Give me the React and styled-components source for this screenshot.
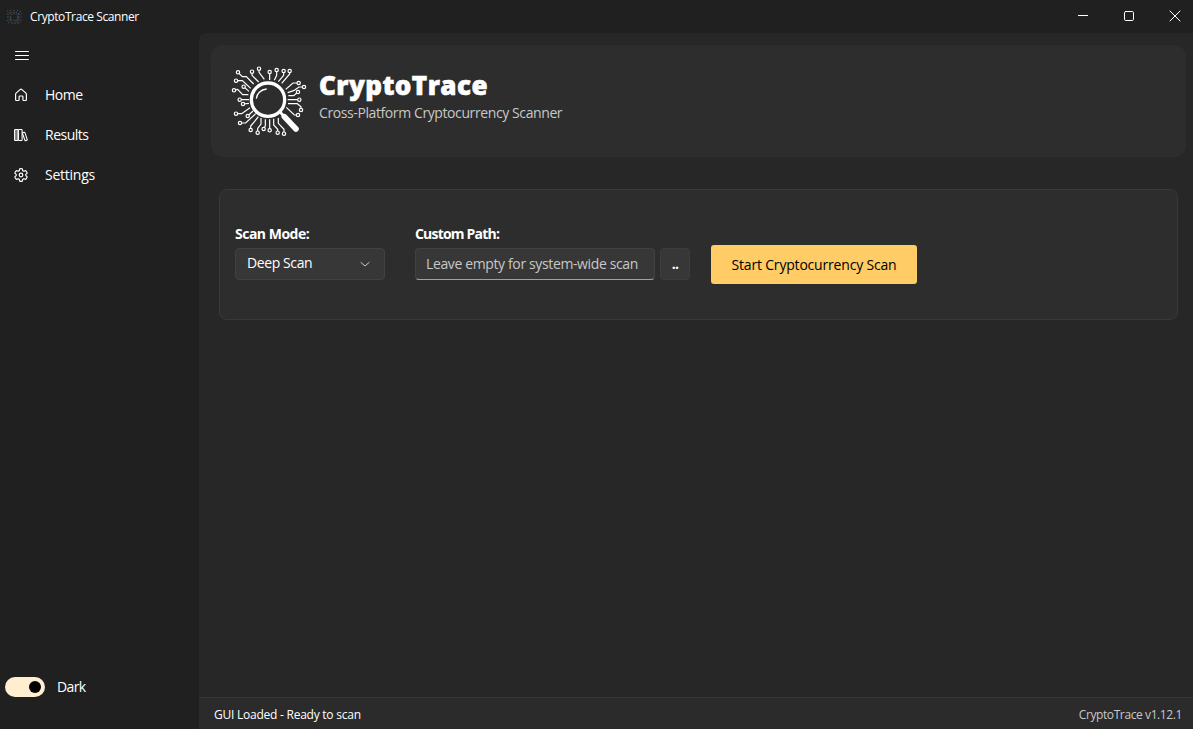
import React from "react";
import styled, { createGlobalStyle } from "styled-components";

const Global = createGlobalStyle`
  *, *::before, *::after { box-sizing: border-box; }
  html, body { margin: 0; background: #202020; }
  body { font-family: "Open Sans", "Noto Sans", sans-serif; font-size: 14px; color: #fff; overflow: hidden; }
  button, input { font: inherit; color: inherit; margin: 0; }
`;

const Window = styled.div`
  display: grid;
  grid-template-columns: 199px 1fr;
  grid-template-rows: 33px 1fr;
  width: 1193px;
  height: 729px;
  background: #202020;
`;

const TitleBar = styled.header`
  grid-column: 1 / -1;
  display: flex;
  align-items: center;
  padding-left: 6px;
`;

const Label = styled.span`
  font-size: ${(p) => p.$size || 14}px;
  font-weight: ${(p) => p.$weight || 400};
  letter-spacing: ${(p) => p.$track || 0}px;
  line-height: ${(p) => p.$line || 20}px;
  color: ${(p) => p.$color || "#fff"};
  white-space: nowrap;
`;

const AppName = styled(Label)`
  -webkit-text-stroke: 0.6px #fff;
`;

const WindowTitle = styled(Label)`
  margin-left: 7px;
`;

const WindowButtons = styled.div`
  display: flex;
  align-self: flex-start;
  margin-left: auto;
`;

const WindowButton = styled.button`
  display: grid;
  place-items: center;
  width: 46px;
  height: 32px;
  padding: 0;
  border: 0;
  background: transparent;
  &:last-child { margin-right: -5px; }
`;

const Sidebar = styled.nav`
  display: flex;
  flex-direction: column;
  padding: 2px 0 22px;
`;

const NavItem = styled.div`
  display: flex;
  align-items: center;
  height: 40px;
  padding-left: 14px;
  padding-top: ${(p) => p.$drop || 0}px;
  gap: 17px;
`;

const ThemeRow = styled.div`
  display: flex;
  align-items: center;
  gap: 12px;
  height: 20px;
  margin-top: auto;
  margin-bottom: 10px;
  padding-left: 5px;
`;

const Toggle = styled.div`
  display: flex;
  align-items: center;
  justify-content: flex-end;
  width: 40px;
  height: 20px;
  padding-right: 4px;
  border-radius: 10px;
  background: #ffefd0;
`;

const Knob = styled.div`
  width: 12px;
  height: 12px;
  border-radius: 50%;
  background: #000;
`;

const Content = styled.main`
  display: flex;
  flex-direction: column;
  background: #272727;
  border-top-left-radius: 8px;
  overflow: hidden;
`;

const Banner = styled.section`
  display: flex;
  height: 112px;
  margin: 12px 7px 0 12px;
  padding: 15px 14px;
  border-radius: 12px;
  background: #2d2d2d;
`;

const BannerText = styled.div`
  display: flex;
  flex-direction: column;
  padding: 7px 0 0 4px;
`;

const Panel = styled.section`
  display: flex;
  align-items: flex-start;
  height: 131px;
  margin: 32px 15px 0 20px;
  padding: 34px 15px 0;
  border: 1px solid #393939;
  border-radius: 8px;
  background: #2d2d2d;
`;

const Field = styled.div`
  display: flex;
  flex-direction: column;
  gap: 4px;
  width: ${(p) => p.$width}px;
  margin-right: ${(p) => p.$after}px;
`;

const Select = styled.div`
  display: flex;
  align-items: center;
  justify-content: space-between;
  height: 32px;
  padding: 0 13px 2px 11px;
  border: 1px solid #414141;
  border-radius: 4px;
  background: #373737;
`;

const PathInput = styled.div`
  display: flex;
  align-items: center;
  height: 32px;
  padding: 0 0 0 10px;
  border: 1px solid #414141;
  border-bottom-color: #a0a0a0;
  border-radius: 4px;
  background: #373737;
`;

const BrowseButton = styled.button`
  width: 30px;
  height: 32px;
  margin: 24px 21px 0 0;
  padding: 0;
  border: 1px solid #3d3d3d;
  border-radius: 4px;
  background: #373737;
`;

const StartButton = styled.button`
  width: 206px;
  height: 39px;
  margin-top: 21px;
  padding: 1px 0 0;
  border: 0;
  border-radius: 3px;
  background: #ffcc66;
`;

const StatusBar = styled.footer`
  display: flex;
  align-items: center;
  justify-content: space-between;
  height: 32px;
  margin-top: auto;
  padding: 2px 11px 0 15px;
  border-top: 1px solid #363636;
  background: #2b2b2b;
`;

/* Each trace starts at its round terminal and runs in towards the lens. */
const traces = [
  [39, 37, "L52 50H64L86 72"],
  [81, 35, "V46L101 66"],
  [102, 26, "V37L118 58"],
  [134, 36, "V60"],
  [155, 30, "V46L148 61"],
  [176, 33, "V46L160 65"],
  [194, 33, "V42L170 70"],
  [33, 62, "H52L77 85"],
  [27, 91, "L38 88L53 104H70"],
  [56, 80, "L72 94"],
  [44, 119, "H72"],
  [54, 132, "L72 130"],
  [33, 161, "H50L75 143"],
  [68, 168, "L84 153"],
  [45, 189, "H62L92 161"],
  [77, 210, "V198L89 184L100 170"],
  [98, 218, "V205L108 192V174"],
  [116, 207, "L121 197V178"],
  [134, 211, "V178"],
  [158, 218, "V208L146 195V176"],
  [177, 221, "V208L160 190V174"],
  [221, 69, "H204L182 88"],
  [237, 81, "H222L206 92L188 98"],
  [219, 96, "L206 107H190"],
  [223, 119, "H188"],
  [228, 150, "V140L217 131H189"],
  [219, 165, "H208L184 142"],
];

function TraceLogo({ width, height }) {
  return (
    <svg width={width} height={height} viewBox="0 0 270 255" fill="none" stroke="#fff" strokeWidth="3.6">
      {traces.map(([x, y, d]) => (
        <g key={`${x}-${y}`}>
          <path d={`M${x} ${y}${d}`} />
          <circle cx={x} cy={y} r="5" fill="#2d2d2d" />
        </g>
      ))}
      <circle cx="129" cy="119" r="50" strokeWidth="10" fill="#2d2d2d" />
      <path d="M94 116C95 101 107 89 125 87" strokeWidth="4" />
      <path d="M165 156L176 168" strokeWidth="8" />
      <path d="M178 170L213 207" strokeWidth="17" strokeLinecap="round" />
    </svg>
  );
}

const BannerLogo = styled.div`
  display: flex;
  width: 90px;
  height: 85px;
`;

const AppMark = styled.svg`
  display: block;
  width: 17px;
  height: 16px;
`;

const Icon = ({ size = 14, children, width = 1.1 }) => (
  <svg width={size} height={size} viewBox={`0 0 ${size} ${size}`} fill="none" stroke="#fff" strokeWidth={width} strokeLinecap="round" strokeLinejoin="round">
    {children}
  </svg>
);

const MenuIcon = () => (
  <Icon size={16} width={1}><path d="M1.5 3.5H14.5M1.5 7.5H14.5M1.5 11.5H14.5" /></Icon>
);
const HomeIcon = () => (
  <Icon width={1.2}><path d="M1.6 6.2Q1.6 5.6 2.1 5.1L6.3 1.4Q7 .9 7.7 1.4L11.9 5.1Q12.4 5.6 12.4 6.2V11.7Q12.4 12.5 11.6 12.5H9.6Q8.9 12.5 8.9 11.8V8.8Q8.9 8 8.1 8H5.9Q5.1 8 5.1 8.8V11.8Q5.1 12.5 4.4 12.5H2.4Q1.6 12.5 1.6 11.7Z" /></Icon>
);
const ResultsIcon = () => (
  <Icon width={1.1}>
    <rect x=".6" y="1.5" width="3.5" height="11" rx=".7" fill="#777" />
    <rect x="4.5" y="1.5" width="3.6" height="11" rx=".7" />
    <path d="M8.8 4.8L10 4.3Q10.8 4.1 11 4.8L13.2 11.4Q13.4 12.1 12.7 12.3L11.7 12.6Q11 12.8 10.8 12L8.5 5.4Q8.4 4.9 8.8 4.8Z" />
  </Icon>
);
const SettingsIcon = () => (
  <Icon width={1.2}>
    <path d="M5.7 .8Q7 .4 8.3 .8L8.7 2.6L9.8 3.2L11.6 2.6Q12.8 3.8 13.2 5.1L11.8 6.4V7.6L13.2 8.9Q12.8 10.2 11.6 11.4L9.8 10.8L8.7 11.4L8.3 13.2Q7 13.6 5.7 13.2L5.3 11.4L4.2 10.8L2.4 11.4Q1.2 10.2 .8 8.9L2.2 7.6V6.4L.8 5.1Q1.2 3.8 2.4 2.6L4.2 3.2L5.3 2.6Z" />
    <circle cx="7" cy="7" r="1.8" />
  </Icon>
);

const navItems = [
  ["Home", HomeIcon, -0.5],
  ["Results", ResultsIcon, -0.5],
  ["Settings", SettingsIcon, -0.25],
];

export default function App() {
  return (
    <>
      <Global />
      <Window>
        <TitleBar>
          <AppMark viewBox="0 0 17 16" fill="none" stroke="#4a6172" strokeWidth="1" strokeDasharray="1.6 1" opacity=".8">
            <circle cx="8.2" cy="8" r="3.6" />
            <path d="M1 1.5L5 5M4 .8L6 4M8 .8V4M12 .8L10 4M15 2L11.5 5.5M1 5H4.5M1 8H4.5M1 11.5L5 10M2 14L5.5 11M6 15V12M9 15V12M12 15L10.5 12M11 11L15 14.5M12 8H15.5M12 10L15.5 11.5M12 6L15.5 5" />
          </AppMark>
          <WindowTitle $size={12} $track={-0.4}>CryptoTrace Scanner</WindowTitle>
          <WindowButtons>
            <WindowButton aria-label="Minimize"><Icon size={12} width={1}><path d="M1 5.5H11" strokeLinecap="butt" /></Icon></WindowButton>
            <WindowButton aria-label="Maximize"><Icon size={12} width={1}><rect x="1.5" y="1.5" width="9" height="9" rx="1.3" /></Icon></WindowButton>
            <WindowButton aria-label="Close"><Icon size={12} width={1}><path d="M1 1L11 11M11 1L1 11" /></Icon></WindowButton>
          </WindowButtons>
        </TitleBar>
        <Sidebar>
          <NavItem $drop={2}><MenuIcon /></NavItem>
          {navItems.map(([name, Glyph, track]) => (
            <NavItem key={name}>
              <Glyph />
              <Label $track={track} $weight={450}>{name}</Label>
            </NavItem>
          ))}
          <ThemeRow>
            <Toggle><Knob /></Toggle>
            <Label $track={-0.6}>Dark</Label>
          </ThemeRow>
        </Sidebar>
        <Content>
          <Banner>
            <BannerLogo><TraceLogo width={90} height={85} /></BannerLogo>
            <BannerText>
              <AppName $size={26} $weight={800} $line={36} $track={0.45}>CryptoTrace</AppName>
              <Label $color="#c8c8c8" $line={20} $track={-0.4}>Cross-Platform Cryptocurrency Scanner</Label>
            </BannerText>
          </Banner>
          <Panel>
            <Field $width={150} $after={30}>
              <Label $weight={700} $track={-0.5}>Scan Mode:</Label>
              <Select>
                <Label $track={-0.4}>Deep Scan</Label>
                <Icon size={12} width={1}><path d="M2 5.5L6 9L10 5.5" stroke="#c8c8c8" /></Icon>
              </Select>
            </Field>
            <Field $width={240} $after={5}>
              <Label $weight={700} $track={-0.8}>Custom Path:</Label>
              <PathInput><Label $color="#c8c8c8" $track={-0.37}>Leave empty for system-wide scan</Label></PathInput>
            </Field>
            <BrowseButton><Label $weight={700} $track={-0.8}>..</Label></BrowseButton>
            <StartButton><Label $color="#000" $weight={500} $track={-0.19}>Start Cryptocurrency Scan</Label></StartButton>
          </Panel>
          <StatusBar>
            <Label $size={12} $track={-0.24}>GUI Loaded - Ready to scan</Label>
            <Label $size={12} $color="#c8c8c8" $track={-0.4}>CryptoTrace v1.12.1</Label>
          </StatusBar>
        </Content>
      </Window>
    </>
  );
}
